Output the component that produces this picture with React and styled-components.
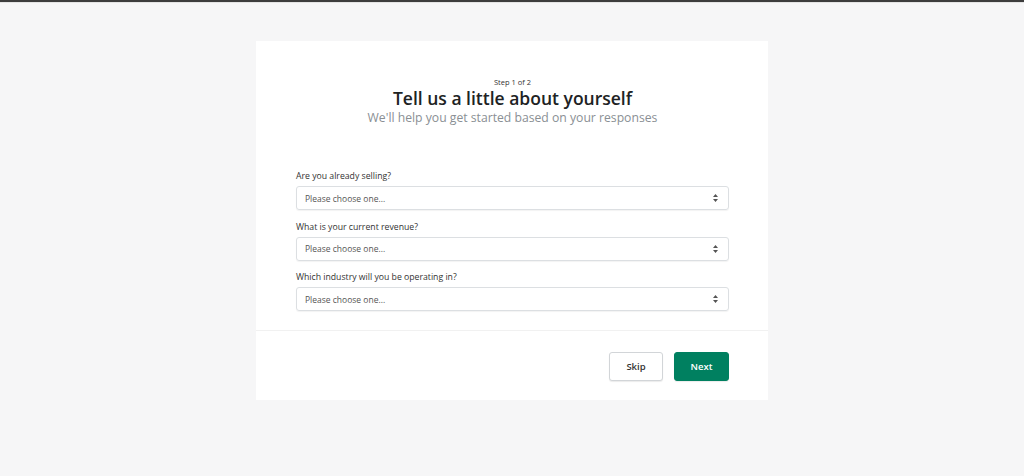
import React from 'react';
import styled, { createGlobalStyle } from 'styled-components';

const GlobalStyle = createGlobalStyle`
  html, body { margin: 0; padding: 0; }
  body {
    background: #f6f6f7;
    font-family: 'Open Sans', 'Noto Sans', sans-serif;
    color: #212b36;
  }
`;

const TopBar = styled.div`
  height: 2px;
  background: #3d3d3d;
  border-bottom: 1px solid #e4e4e4;
`;

const Page = styled.div`
  display: flex;
  justify-content: center;
  padding-top: 38px;
  height: 435px;
`;

const Card = styled.div`
  width: 512px;
  height: 359px;
  background: #fff;
  display: flex;
  flex-direction: column;
`;

const Body = styled.div`
  height: 290px;
  padding: 0 39px 0 40px;
  border-bottom: 1px solid #f1f1f1;
  box-sizing: border-box;
`;

const Header = styled.div`
  text-align: center;
  padding-top: 36px;
`;

const Step = styled.div`
  font-size: 7.5px;
  line-height: 10px;
  color: #333;
`;

const Title = styled.h1`
  margin: 0;
  font-size: 17.5px;
  line-height: 22px;
  font-weight: 600;
  color: #202223;
`;

const Subtitle = styled.p`
  margin: 0;
  font-size: 12.2px;
  line-height: 18px;
  color: #8a8f94;
`;

const Form = styled.div`
  margin-top: 43px;
  display: flex;
  flex-direction: column;
  gap: 10.5px;
`;

const Field = styled.div`
  display: flex;
  flex-direction: column;
  gap: 4px;
`;

const Label = styled.label`
  font-size: 8.7px;
  line-height: 12px;
  color: #333;
`;

const Select = styled.div`
  height: 24px;
  box-sizing: border-box;
  border: 1px solid #dcdfe2;
  border-radius: 3px;
  box-shadow: 0 1px 1px rgba(0, 0, 0, 0.05);
  display: flex;
  align-items: center;
  justify-content: space-between;
  padding: 0 10px 0 8px;
  font-size: 8.5px;
  color: #555;
`;

const Arrows = styled.svg`
  width: 5px;
  height: 8px;
`;

const Footer = styled.div`
  flex: 1;
  display: flex;
  justify-content: flex-end;
  align-items: center;
  gap: 11px;
  padding: 1px 39px 0 0;
`;

const Button = styled.button`
  height: 29px;
  width: ${(p) => (p.primary ? '55px' : '54px')};
  border-radius: 3px;
  font-family: inherit;
  font-size: 9.5px;
  font-weight: 600;
  cursor: pointer;
  border: 1px solid ${(p) => (p.primary ? '#008060' : '#d2d5d8')};
  background: ${(p) => (p.primary ? '#008060' : '#fff')};
  color: ${(p) => (p.primary ? '#fff' : '#333')};
  box-shadow: 0 1px 1px rgba(0, 0, 0, 0.08);
`;

const questions = [
  'Are you already selling?',
  'What is your current revenue?',
  'Which industry will you be operating in?',
];

const App = () => (
  <>
    <GlobalStyle />
    <TopBar />
    <Page>
      <Card>
        <Body>
          <Header>
            <Step>Step 1 of 2</Step>
            <Title>Tell us a little about yourself</Title>
            <Subtitle>We'll help you get started based on your responses</Subtitle>
          </Header>
          <Form>
            {questions.map((q) => (
              <Field key={q}>
                <Label>{q}</Label>
                <Select>
                  <span>Please choose one...</span>
                  <Arrows viewBox="0 0 5 8">
                    <path d="M2.5 0 L5 3 H0 Z M2.5 8 L5 5 H0 Z" fill="#555" />
                  </Arrows>
                </Select>
              </Field>
            ))}
          </Form>
        </Body>
        <Footer>
          <Button>Skip</Button>
          <Button primary>Next</Button>
        </Footer>
      </Card>
    </Page>
  </>
);

export default App;
